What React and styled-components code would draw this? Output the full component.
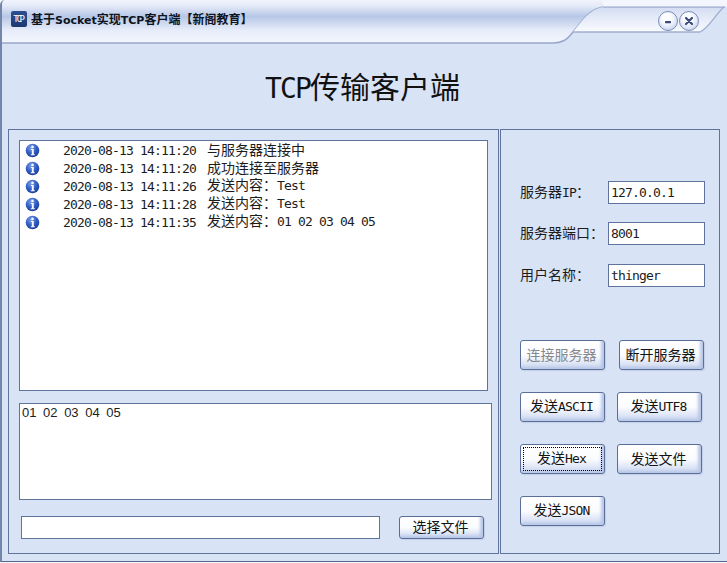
import React from "react";
import styled, { createGlobalStyle } from "styled-components";

const CJK = '"Noto Sans CJK SC", sans-serif';
const MONO = '"DejaVu Sans Mono", monospace';

const Global = createGlobalStyle`
  html, body { margin: 0; padding: 0; background: #f4f6fb; }
  * { box-sizing: border-box; }
`;

const Window = styled.div`
  position: relative;
  width: 727px;
  height: 562px;
  background: #d9e3f6;
  border-left: 2px solid #7185ad;
  border-bottom: 1px solid #56698f;
  border-top-left-radius: 5px;
  font-family: ${CJK};
  font-size: 14px;
  color: #1c1c1c;
  overflow: hidden;
`;

const TitleBar = styled.header`
  position: relative;
  height: 44px;
  margin-left: -2px;
  display: flex;
  align-items: flex-start;
  padding: 9px 28px 0 11px;
`;

const TitleArt = styled.svg`
  position: absolute;
  left: 0;
  top: 0;
`;

const AppIcon = styled.div`
  position: relative;
  width: 16px;
  height: 16px;
  margin-top: 2px;
  border-radius: 2px;
  background: linear-gradient(#2c4f92, #1c3872);
  color: #fff;
  font: 9px/16px ${MONO};
  letter-spacing: -2.2px;
  padding-right: 2px;
  text-align: center;
`;

const AppTitle = styled.div`
  position: relative;
  margin-left: 4px;
  font-size: 12px;
  font-weight: 700;
  line-height: 20px;
  color: #0d1320;
  white-space: nowrap;
`;

const TitleLatin = styled.span`
  font-family: "DejaVu Sans", sans-serif;
  font-weight: 700;
  font-size: 11px;
`;

const Controls = styled.div`
  position: relative;
  margin-left: auto;
  margin-top: 2px;
  display: flex;
  gap: 1px;
`;

const Ctl = styled.div`
  width: 20px;
  height: 20px;
  border-radius: 50%;
  border: 1px solid #7c8db5;
  background: radial-gradient(circle at 45% 35%, #fbfcff 30%, #d9e2f5 65%, #aebddd 100%);
  display: flex;
  align-items: center;
  justify-content: center;
`;

const Heading = styled.h1`
  margin: 0;
  height: 85px;
  padding: 16px 2px 0 0;
  margin-left: -2px;
  text-align: center;
  font-size: 30px;
  font-weight: 400;
  line-height: 50px;
  color: #111;
`;

const HeadingLatin = styled.span`
  font-family: ${MONO};
  font-size: 28px;
  letter-spacing: -1.86px;
`;

const Body = styled.main`
  display: flex;
  gap: 1px;
  padding-left: 6px;
`;

const Panel = styled.section`
  height: 425px;
  border: 1px solid #5f739c;
  background: #d9e3f6;
`;

const LeftPanel = styled(Panel)`
  width: 491px;
  padding: 10px 0 0 10px;
  display: flex;
  flex-direction: column;
`;

const RightPanel = styled(Panel)`
  width: 220px;
  padding: 51px 14px 0 19px;
  display: flex;
  flex-direction: column;
`;

const LogBox = styled.div`
  width: 469px;
  height: 251px;
  background: #fff;
  border: 1px solid #5f739c;
`;

const LogRow = styled.div`
  display: flex;
  align-items: center;
  height: 18px;
  padding-left: 5px;
  line-height: 18px;
  white-space: nowrap;
`;

const LogTime = styled.span`
  margin-left: 23px;
  width: 144px;
  flex: none;
`;

const LogMessage = styled.span`
  margin-top: -2px;
`;

const Latin = styled.span`
  font-family: ${MONO};
  font-size: 13px;
  letter-spacing: -0.83px;
`;

const Composer = styled.textarea`
  display: block;
  width: 473px;
  height: 97px;
  margin-top: 12px;
  padding: 1px 2px;
  background: #fff;
  border: 1px solid #5f739c;
  border-radius: 0;
  outline: none;
  resize: none;
  overflow: hidden;
  font: 13px/16px "Liberation Sans", sans-serif;
  word-spacing: 3px;
  color: #1c1c1c;
`;

const FileRow = styled.div`
  display: flex;
  align-items: center;
  margin-top: 16px;
  padding-left: 2px;
  gap: 19px;
`;

const FileField = styled.input`
  width: 359px;
  height: 23px;
  background: #fff;
  border: 1px solid #5f739c;
  border-radius: 0;
  outline: none;
`;

const Field = styled.div`
  display: flex;
  align-items: center;
  height: 23px;
  margin-bottom: ${(p) => p.$gap}px;
`;

const FieldLabel = styled.label`
  width: 88px;
  flex: none;
  padding-bottom: 3px;
  white-space: nowrap;
`;

const FieldInput = styled.input`
  width: 97px;
  height: 23px;
  padding: 0 2px;
  background: #fff;
  border: 1px solid #5f739c;
  border-radius: 0;
  outline: none;
  font-family: ${MONO};
  font-size: 13px;
  letter-spacing: -0.83px;
  color: #1c1c1c;
`;

const Button = styled.button`
  width: 85px;
  height: ${(p) => p.$h || 30}px;
  padding: 0 2px 3px 0;
  border: 1px solid #5a6e98;
  border-radius: 3px;
  background: linear-gradient(#ffffff 0%, #fbfcff 50%, #c9d5ef 100%);
  box-shadow: inset -3px -2px 3px #b9c7e8, 1px 1px 1px #c3cfe8;
  font-family: ${CJK};
  font-size: 14px;
  line-height: 18px;
  color: ${(p) => (p.disabled ? "#85898f" : "#141414")};
  white-space: nowrap;
  &:focus { outline: none; }
  ${(p) => p.$focused && "outline: 1px dotted #000; outline-offset: -4px;"}
`;

const Buttons = styled.div`
  display: flex;
  flex-direction: column;
  gap: 22px;
  margin-top: 53px;
`;

const ButtonRow = styled.div`
  display: flex;
  gap: ${(p) => p.$gap}px;
`;

const Mixed = ({ text, as: L = Latin }) =>
  text.split(/([\x00-\x7f]+)/).filter(Boolean).map((s, i) =>
    /^[\x00-\x7f]/.test(s) ? <L key={i}>{s}</L> : <React.Fragment key={i}>{s}</React.Fragment>
  );

const InfoIcon = () => (
  <svg width="15" height="15" viewBox="0 0 15 15" style={{ flex: "none" }}>
    <defs>
      <radialGradient id="inf" cx="40%" cy="30%" r="75%">
        <stop offset="0" stopColor="#7f9fe8" />
        <stop offset="0.55" stopColor="#2f5cc4" />
        <stop offset="1" stopColor="#1c3a94" />
      </radialGradient>
    </defs>
    <circle cx="7.5" cy="7.5" r="6.8" fill="url(#inf)" />
    <circle cx="7.5" cy="3.9" r="1.3" fill="#f4f7ff" />
    <path d="M5.9 6h2.9v5.2h1v1.1H5.7v-1.1h1.1V7.1H5.9z" fill="#f4f7ff" />
  </svg>
);

const logs = [
  ["2020-08-13 14:11:20", "与服务器连接中"],
  ["2020-08-13 14:11:20", "成功连接至服务器"],
  ["2020-08-13 14:11:26", "发送内容：Test"],
  ["2020-08-13 14:11:28", "发送内容：Test"],
  ["2020-08-13 14:11:35", "发送内容：01 02 03 04 05"],
];

const TitleShape = () => (
  <TitleArt width="727" height="46" viewBox="0 0 727 46">
    <defs>
      <linearGradient id="band" x1="0" y1="0" x2="0" y2="1">
        <stop offset="0" stopColor="#f1f4fc" />
        <stop offset="0.14" stopColor="#e4eaf8" />
        <stop offset="0.38" stopColor="#b6c7e6" />
        <stop offset="0.7" stopColor="#e6ecf9" />
        <stop offset="1" stopColor="#f3f6fd" />
      </linearGradient>
      <linearGradient id="tab" x1="0" y1="0" x2="0" y2="1">
        <stop offset="0" stopColor="#d3ddf2" />
        <stop offset="1" stopColor="#fafbff" />
      </linearGradient>
    </defs>
    <path d="M0 0H727V7H603C590 9 583 20 573 32C567 40 562 43 553 43H0Z" fill="url(#band)" />
    <path d="M0 43H553C562 43 567 40 573 32C583 20 590 9 603 7H725" fill="none" stroke="#98a8cb" strokeWidth="1.5" />
    <path d="M603 7H724C714 16 710 27 700 32H573C583 20 590 9 603 7Z" fill="url(#tab)" />
    <path d="M603 7H724C714 16 710 27 700 32H573" fill="none" stroke="#a0aecf" strokeWidth="1.3" />
    <rect x="603" y="0" width="124" height="6.4" fill="#f3f6fd" />
  </TitleArt>
);

export default function App() {
  return (
    <>
      <Global />
      <Window>
        <TitleBar>
          <TitleShape />
          <AppIcon>TCP</AppIcon>
          <AppTitle>
            <Mixed text="基于Socket实现TCP客户端【新阁教育】" as={TitleLatin} />
          </AppTitle>
          <Controls>
            <Ctl>
              <svg width="10" height="10" viewBox="0 0 10 10">
                <rect x="2" y="5" width="6" height="2.2" rx="0.6" fill="#3b4a78" />
              </svg>
            </Ctl>
            <Ctl>
              <svg width="10" height="10" viewBox="0 0 10 10">
                <path d="M2 2l6 6M8 2l-6 6" stroke="#3b4a78" strokeWidth="2.2" strokeLinecap="round" />
              </svg>
            </Ctl>
          </Controls>
        </TitleBar>
        <Heading>
          <Mixed text="TCP传输客户端" as={HeadingLatin} />
        </Heading>
        <Body>
          <LeftPanel>
            <LogBox>
              {logs.map(([t, m], i) => (
                <LogRow key={i}>
                  <InfoIcon />
                  <LogTime>
                    <Latin>{t}</Latin>
                  </LogTime>
                  <LogMessage>
                    <Mixed text={m} />
                  </LogMessage>
                </LogRow>
              ))}
            </LogBox>
            <Composer readOnly value="01 02 03 04 05" />
            <FileRow>
              <FileField readOnly />
              <Button $h={23}>选择文件</Button>
            </FileRow>
          </LeftPanel>
          <RightPanel>
            <Field $gap={18}>
              <FieldLabel>
                <Mixed text="服务器IP：" />
              </FieldLabel>
              <FieldInput readOnly value="127.0.0.1" />
            </Field>
            <Field $gap={19}>
              <FieldLabel>服务器端口：</FieldLabel>
              <FieldInput readOnly value="8001" />
            </Field>
            <Field $gap={0}>
              <FieldLabel>用户名称：</FieldLabel>
              <FieldInput readOnly value="thinger" />
            </Field>
            <Buttons>
              <ButtonRow $gap={14}>
                <Button disabled>连接服务器</Button>
                <Button>断开服务器</Button>
              </ButtonRow>
              <ButtonRow $gap={12}>
                <Button>
                  <Mixed text="发送ASCII" />
                </Button>
                <Button>
                  <Mixed text="发送UTF8" />
                </Button>
              </ButtonRow>
              <ButtonRow $gap={12}>
                <Button $focused>
                  <Mixed text="发送Hex" />
                </Button>
                <Button>发送文件</Button>
              </ButtonRow>
              <ButtonRow $gap={12}>
                <Button>
                  <Mixed text="发送JSON" />
                </Button>
              </ButtonRow>
            </Buttons>
          </RightPanel>
        </Body>
      </Window>
    </>
  );
}
